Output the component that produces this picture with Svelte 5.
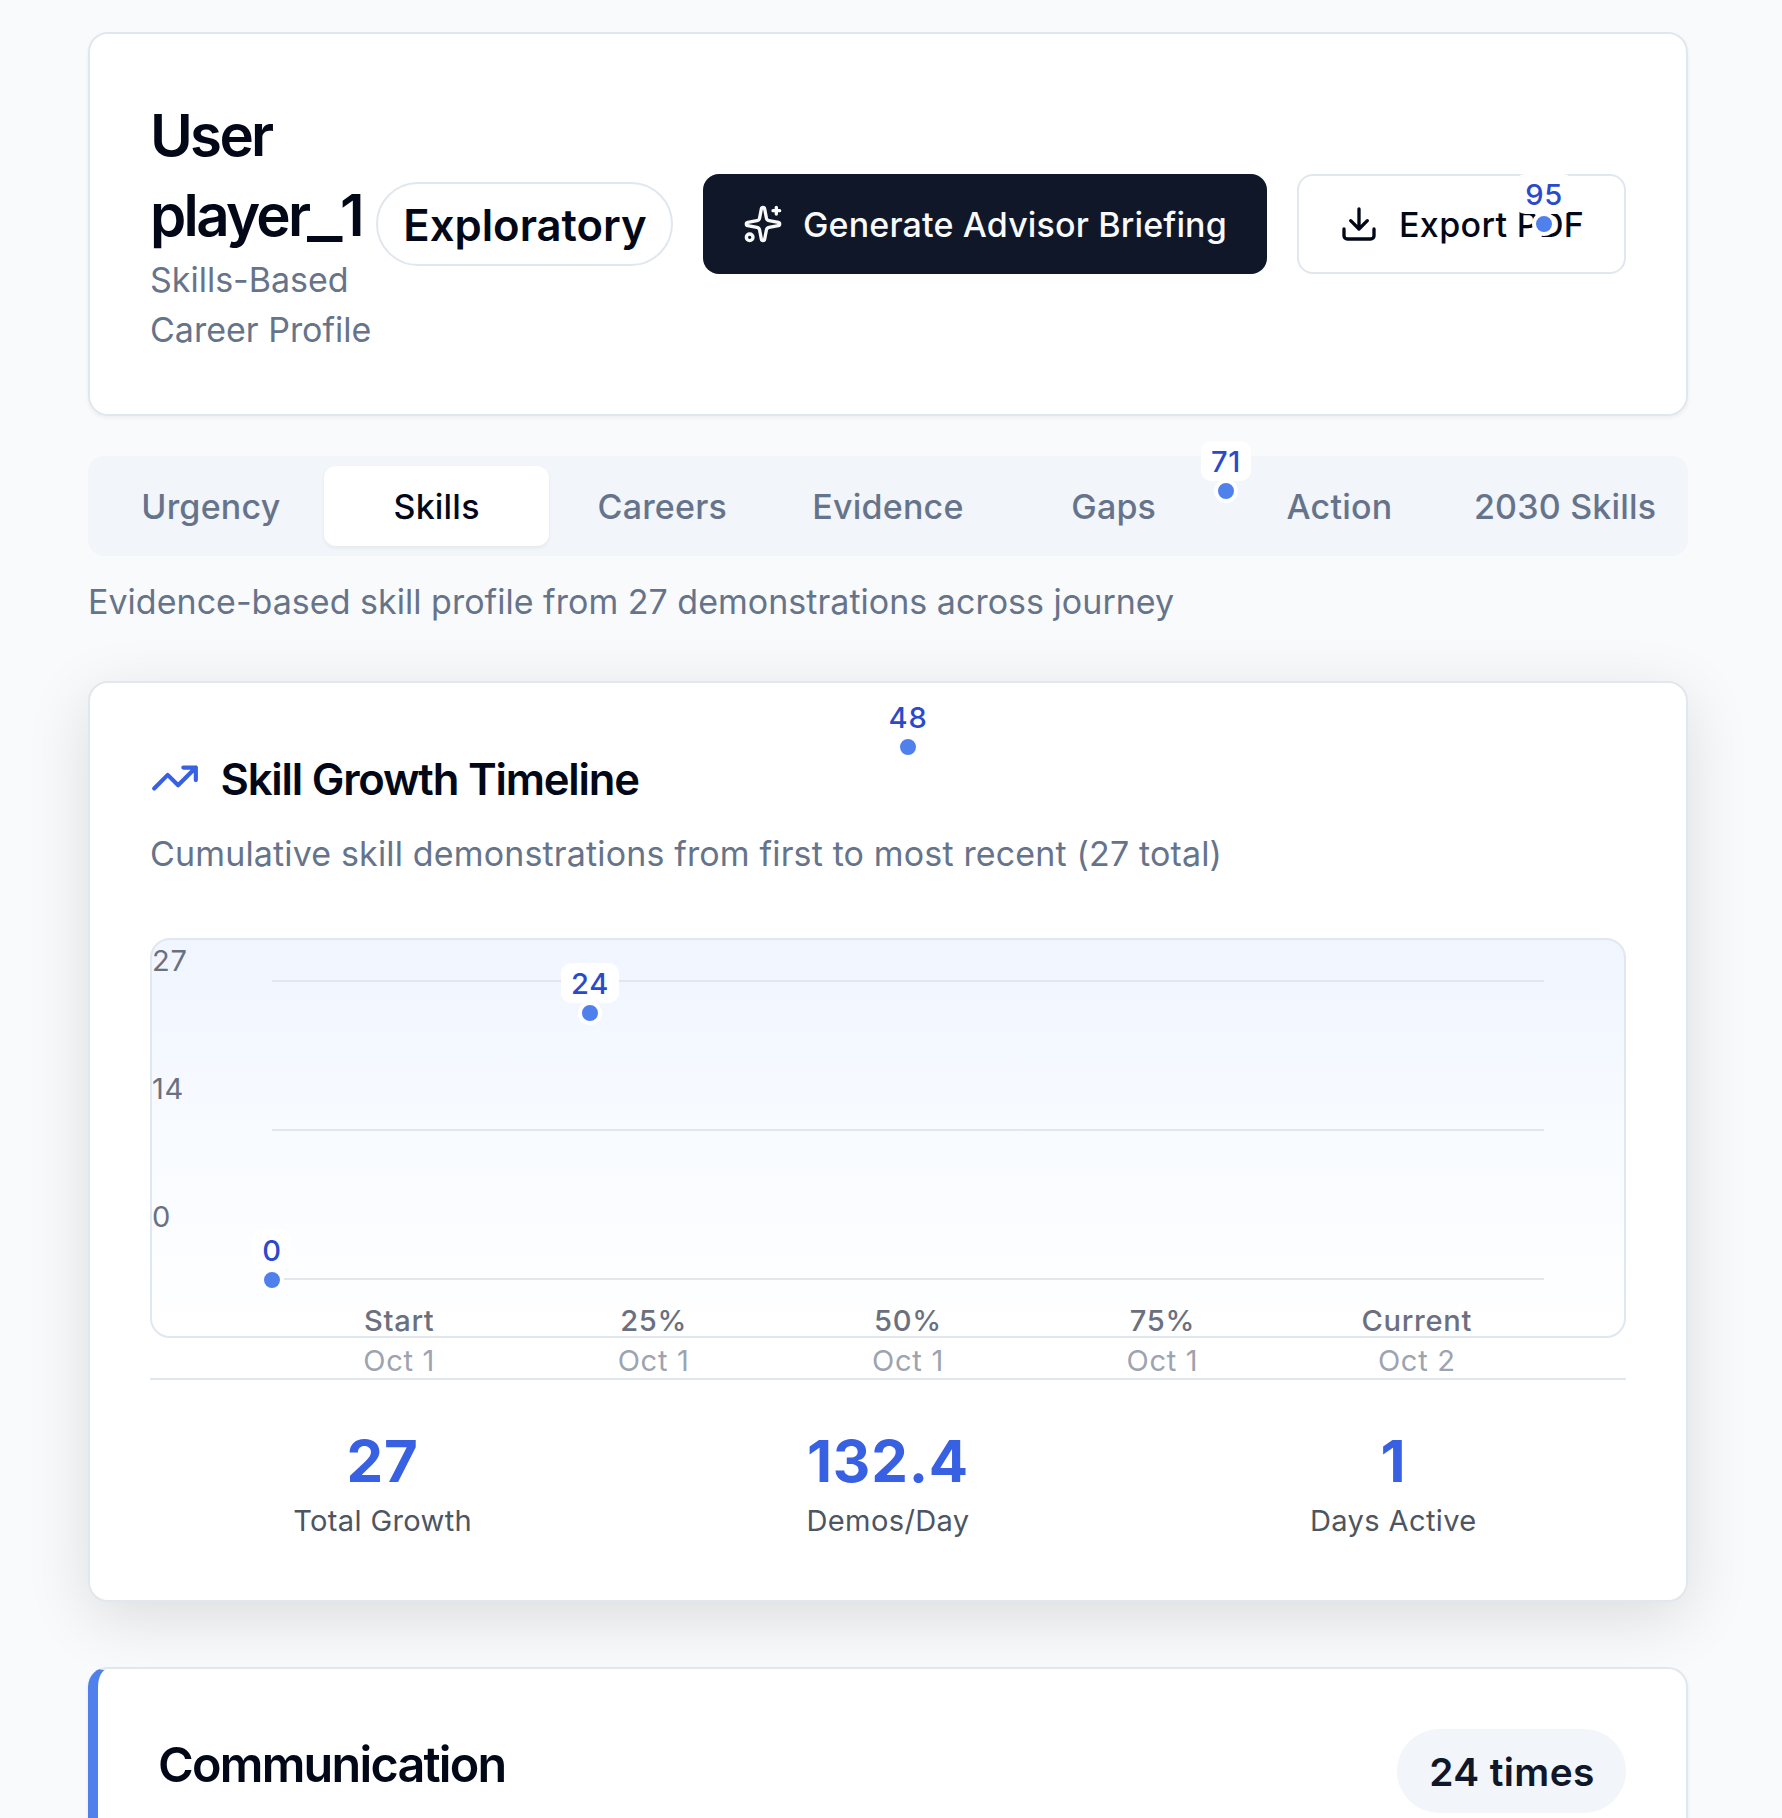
<script>
  const tabs = ['Urgency', 'Skills', 'Careers', 'Evidence', 'Gaps', 'Action', '2030 Skills'];
  const activeTab = 'Skills';

  const maxDemos = 27;
  const points = [
    { value: 0, label: 'Start', date: 'Oct 1' },
    { value: 24, label: '25%', date: 'Oct 1' },
    { value: 48, label: '50%', date: 'Oct 1' },
    { value: 71, label: '75%', date: 'Oct 1' },
    { value: 95, label: 'Current', date: 'Oct 2' }
  ];
  const ticks = [27, 14, 0];
  const stats = [
    { value: '27', label: 'Total Growth' },
    { value: '132.4', label: 'Demos/Day' },
    { value: '1', label: 'Days Active' }
  ];
</script>

<main class="page">
  <section class="card profile">
    <div class="identity">
      <h1><span class="word">User</span> <span class="word">player<em>_</em>1</span></h1>
      <p>Skills-Based Career Profile</p>
    </div>
    <span class="stage">Exploratory</span>
    <button class="btn primary">
      <svg class="icon" viewBox="0 0 24 24">
        <path d="M11.017 2.814a1 1 0 0 1 1.966 0l1.051 5.558a2 2 0 0 0 1.594 1.594l5.558 1.051a1 1 0 0 1 0 1.966l-5.558 1.051a2 2 0 0 0-1.594 1.594l-1.051 5.558a1 1 0 0 1-1.966 0l-1.051-5.558a2 2 0 0 0-1.594-1.594l-5.558-1.051a1 1 0 0 1 0-1.966l5.558-1.051a2 2 0 0 0 1.594-1.594z" />
        <path d="M20 2v4M22 4h-4" />
        <circle cx="4" cy="20" r="2" />
      </svg>
      <span>Generate Advisor Briefing</span>
    </button>
    <button class="btn outline">
      <svg class="icon" viewBox="0 0 24 24">
        <path d="M12 15V3M21 15v4a2 2 0 0 1-2 2H5a2 2 0 0 1-2-2v-4M7 10l5 5 5-5" />
      </svg>
      <span>Export PDF</span>
    </button>
  </section>

  <nav class="tabs">
    {#each tabs as tab}
      <button class="tab" class:active={tab === activeTab}>{tab}</button>
    {/each}
  </nav>

  <p class="intro">Evidence-based skill profile from 27 demonstrations across journey</p>

  <section class="card timeline">
    <h2>
      <svg class="trend" viewBox="0 0 24 24"><path d="M16 7h6v6M22 7l-8.5 8.5-5-5L2 17" /></svg>
      <span>Skill Growth Timeline</span>
    </h2>
    <p class="description">Cumulative skill demonstrations from first to most recent (27 total)</p>

    <div class="chart">
      <div class="y-axis">
        {#each ticks as tick}<span>{tick}</span>{/each}
      </div>
      <div class="plot-column">
        <div class="plot">
          <i></i><i></i><i></i>
          {#each points as point, index}
            <div
              class="point"
              style:left="{(index / (points.length - 1)) * 100}%"
              style:bottom="{(point.value / maxDemos) * 100}%"
            >
              <span class="dot"></span>
              <span class="bubble">{point.value}</span>
            </div>
          {/each}
        </div>
        <div class="x-axis">
          {#each points as point}
            <div><b>{point.label}</b><span>{point.date}</span></div>
          {/each}
        </div>
      </div>
    </div>

    <div class="stats">
      {#each stats as stat}
        <div><strong>{stat.value}</strong><span>{stat.label}</span></div>
      {/each}
    </div>
  </section>

  <section class="card skill">
    <h3>Communication</h3>
    <span class="count">24 times</span>
  </section>
</main>

<style>
  :global(body) {
    background: #f9fafc;
  }

  .page {
    box-sizing: border-box;
    height: 1818px;
    padding: 32px 94px 0 88px;
    overflow: hidden;
    color: #020817;
    font-family: Inter, 'Liberation Sans', sans-serif;
    font-size: 34px;
    line-height: 50px;
    background: #f9fafc;
  }

  h1, h2, h3, p {
    margin: 0;
  }

  button {
    border: 0;
    font: inherit;
    color: inherit;
  }

  svg {
    flex: none;
    fill: none;
    stroke: currentColor;
    stroke-width: 2;
    stroke-linecap: round;
    stroke-linejoin: round;
  }

  .card {
    box-sizing: border-box;
    padding: 60px;
    border: 2px solid #e1e7ef;
    border-radius: 20px;
    background: rgba(255, 255, 255, 0.95);
    box-shadow: 0 2px 4px rgba(0, 0, 0, 0.05);
  }

  .profile {
    display: flex;
    align-items: center;
    height: 384px;
  }

  .identity {
    width: 226px;
    padding-top: 1px;
    margin-bottom: -1px;
  }

  h1 {
    font-size: 58.2px;
    font-weight: 600;
    line-height: 80px;
  }

  h1 span {
    display: block;
  }

  .word {
    letter-spacing: -2.7px;
  }

  h1 em {
    display: inline-block;
    margin: 0 8px 0 -1px;
    font-style: normal;
    transform: scaleX(1.3);
    transform-origin: left;
  }

  .identity p,
  .intro,
  .description {
    color: #66748b;
  }

  .stage {
    box-sizing: border-box;
    width: 297px;
    height: 84px;
    margin-right: 30px;
    padding-left: 1px;
    border: 2px solid #e1e7ef;
    border-radius: 42px;
    font-size: 43.6px;
    font-weight: 600;
    line-height: 83px;
    text-align: center;
  }

  .btn {
    display: flex;
    box-sizing: border-box;
    align-items: center;
    gap: 20px;
    height: 100px;
    padding: 0 40px;
    border-radius: 16px;
    font-weight: 500;
    white-space: nowrap;
  }

  .btn span {
    padding-top: 1px;
  }

  .primary {
    width: 564px;
    margin-right: 30px;
    color: #f9fafc;
    background: #101729;
    letter-spacing: 0.15px;
  }

  .outline {
    width: 329px;
    border: 2px solid #e1e7ef;
    background: #fff;
    letter-spacing: 0.35px;
  }

  .icon {
    width: 40px;
    height: 40px;
  }

  .tabs {
    display: grid;
    box-sizing: border-box;
    grid-template-columns: repeat(7, 1fr);
    height: 100px;
    margin-top: 40px;
    padding: 10px;
    border-radius: 16px;
    background: #f2f5fa;
  }

  .tab {
    padding: 1px 0 0;
    border-radius: 12px;
    color: #66748b;
    background: none;
    font-weight: 500;
    letter-spacing: 0.2px;
    white-space: nowrap;
  }

  .tab.active {
    color: #020817;
    background: #fff;
    box-shadow: 0 2px 4px rgba(0, 0, 0, 0.06);
  }

  .intro {
    margin-top: 21px;
    letter-spacing: 0.02px;
  }

  .timeline {
    margin-top: 54px;
    box-shadow: 0 16px 64px rgba(0, 0, 0, 0.12);
    background: #fff;
  }

  h2 {
    display: flex;
    align-items: center;
    gap: 20.5px;
    height: 68px;
    font-size: 43.6px;
    font-weight: 600;
    letter-spacing: -1.2px;
  }

  h2 span {
    padding-top: 5px;
  }

  .trend {
    width: 50px;
    height: 50px;
    margin-top: 1px;
    color: #3860e2;
  }

  .description {
    margin-top: 18px;
    letter-spacing: 0.15px;
  }

  .chart {
    display: flex;
    box-sizing: border-box;
    height: 400px;
    margin-top: 59px;
    border: 2px solid #e1e7ef;
    border-radius: 20px;
    background: linear-gradient(#f0f5ff, #f8fbff 50%, #fff);
    font-size: 29.1px;
    line-height: 40px;
    letter-spacing: 0.7px;
  }

  .y-axis {
    display: flex;
    box-sizing: border-box;
    flex-direction: column;
    justify-content: space-between;
    width: 120px;
    height: 297px;
    padding: 1px 0 0;
    color: #6b7080;
  }

  .plot-column {
    width: 1272px;
    padding-top: 40px;
  }

  .plot {
    position: relative;
    display: flex;
    flex-direction: column;
    justify-content: space-between;
    height: 300px;
  }

  .plot i {
    height: 2px;
    background: #e3e6eb;
  }

  .point {
    position: absolute;
    z-index: 2;
    width: 0;
    height: 0;
  }

  .dot {
    position: absolute;
    top: -12px;
    left: -12px;
    width: 16px;
    height: 16px;
    border: 4px solid #fff;
    border-radius: 50%;
    background: #4f80ec;
  }

  .bubble {
    position: absolute;
    bottom: 10px;
    left: 0;
    height: 39px;
    padding: 1px 10px 0;
    border-radius: 10px;
    color: #2b4acb;
    background: #fff;
    font-weight: 500;
    transform: translateX(-50%);
  }

  .x-axis {
    display: grid;
    grid-template-columns: repeat(5, 1fr);
    margin-top: 21px;
    text-align: center;
  }

  .x-axis b,
  .x-axis span {
    display: block;
  }

  .x-axis b {
    color: #6b7080;
    font-weight: 500;
  }

  .x-axis span {
    color: #9da3af;
  }

  .stats {
    display: grid;
    grid-template-columns: repeat(3, 1fr);
    gap: 40px;
    margin-top: 40px;
    padding-top: 41px;
    margin-bottom: -1px;
    border-top: 2px solid #e1e7ef;
    text-align: center;
  }

  .stats strong,
  .stats span {
    display: block;
  }

  .stats strong {
    color: #3860e2;
    font-size: 58.2px;
    font-weight: 700;
    line-height: 80px;
    letter-spacing: 0.8px;
  }

  .stats span {
    color: #4d5562;
    font-size: 29.1px;
    line-height: 40px;
    letter-spacing: 0.35px;
  }

  .skill {
    display: flex;
    align-items: flex-start;
    justify-content: space-between;
    height: 400px;
    margin-top: 65px;
    border-left: 10px solid #4f80ec;
  }

  h3 {
    font-size: 48.5px;
    font-weight: 600;
    line-height: 71px;
    letter-spacing: -1.75px;
  }

  .count {
    box-sizing: border-box;
    width: 229px;
    height: 84px;
    padding-left: 1px;
    border-radius: 42px;
    color: #101729;
    background: #f2f5fa;
    font-size: 38.8px;
    font-weight: 600;
    line-height: 86px;
    letter-spacing: 0.4px;
    text-align: center;
  }
</style>
